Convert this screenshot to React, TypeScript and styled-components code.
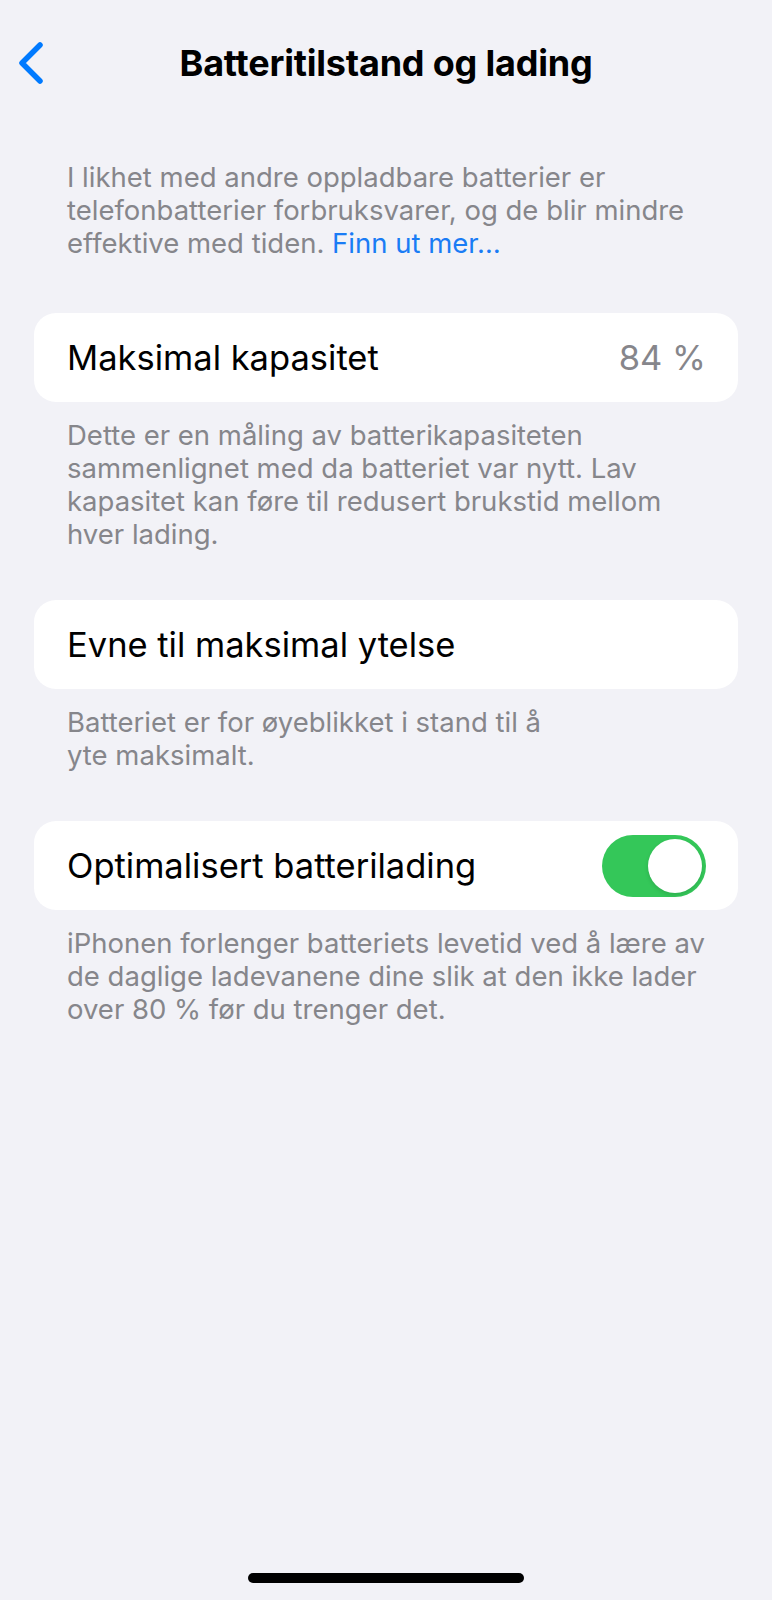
import { FC } from "react";
import styled, { createGlobalStyle } from "styled-components";

const colors = {
  background: "#f2f2f7",
  card: "#ffffff",
  label: "#000000",
  secondary: "#86868b",
  blue: "#1a7cf5",
  green: "#34c759",
};

const GlobalStyle = createGlobalStyle`
  html, body {
    margin: 0;
    padding: 0;
    background: ${colors.background};
  }
  body {
    font-family: Inter, "Noto Sans", "Liberation Sans", sans-serif;
    -webkit-font-smoothing: antialiased;
  }
`;

const Page = styled.div`
  min-height: 1600px;
  display: flex;
  flex-direction: column;
  background: ${colors.background};
  box-sizing: border-box;
  padding-bottom: 17px;
`;

const NavBar = styled.header`
  height: 126px;
  display: grid;
  grid-template-columns: 1fr auto 1fr;
  align-items: center;
  padding: 0 18px;
`;

const BackButton = styled.button`
  width: 30px;
  height: 44px;
  padding: 0;
  border: none;
  background: none;
  display: flex;
  align-items: center;
  justify-content: flex-start;
  cursor: pointer;
`;

const Title = styled.h1`
  margin: 0;
  font-size: 36px;
  font-weight: 700;
  letter-spacing: -0.2px;
  color: ${colors.label};
`;

const Content = styled.main`
  display: flex;
  flex-direction: column;
  gap: 49px;
  padding: 35px 34px 0;

  & > p:first-child {
    margin-bottom: 4px;
  }
`;

const Section = styled.section`
  display: flex;
  flex-direction: column;
  gap: 17px;
`;

const Note = styled.p`
  margin: 0;
  padding: 0 33px;
  font-size: 27.5px;
  line-height: 33px;
  white-space: nowrap;
  color: ${colors.secondary};
`;

const Link = styled.a`
  color: ${colors.blue};
  text-decoration: none;
`;

const Card = styled.div`
  height: 89px;
  background: ${colors.card};
  border-radius: 22px;
  display: flex;
  align-items: center;
  justify-content: space-between;
  padding: 0 32px 0 33px;
`;

const RowLabel = styled.span`
  font-size: 34.5px;
  color: ${colors.label};
`;

const RowValue = styled.span`
  font-size: 34.5px;
  color: ${colors.secondary};
`;

const Toggle = styled.div<{ $on: boolean }>`
  width: 104px;
  height: 62px;
  border-radius: 31px;
  background: ${(p) => (p.$on ? colors.green : "#e9e9eb")};
  display: flex;
  align-items: center;
  justify-content: ${(p) => (p.$on ? "flex-end" : "flex-start")};
  padding: 0 4px;
  box-sizing: border-box;
`;

const Knob = styled.div`
  width: 54px;
  height: 54px;
  border-radius: 50%;
  background: #ffffff;
  box-shadow: 0 2px 4px rgba(0, 0, 0, 0.12);
`;

const HomeIndicator = styled.div`
  margin: auto auto 0;
  width: 276px;
  height: 10px;
  border-radius: 5px;
  background: #000000;
`;

const Chevron: FC = () => (
  <svg width="26" height="42" viewBox="0 0 26 42">
    <polyline
      points="22,3 4,21 22,39"
      fill="none"
      stroke="#007aff"
      strokeWidth="5.5"
      strokeLinecap="round"
      strokeLinejoin="round"
    />
  </svg>
);

const App: FC = () => {
  return (
    <Page>
      <GlobalStyle />
      <NavBar>
        <BackButton aria-label="Tilbake">
          <Chevron />
        </BackButton>
        <Title>Batteritilstand og lading</Title>
        <span />
      </NavBar>
      <Content>
        <Note>
          I likhet med andre oppladbare batterier er
          <br />
          telefonbatterier forbruksvarer, og de blir mindre
          <br />
          effektive med tiden. <Link href="#">Finn ut mer…</Link>
        </Note>
        <Section>
          <Card>
            <RowLabel>Maksimal kapasitet</RowLabel>
            <RowValue>84 %</RowValue>
          </Card>
          <Note>
            Dette er en måling av batterikapasiteten
            <br />
            sammenlignet med da batteriet var nytt. Lav
            <br />
            kapasitet kan føre til redusert brukstid mellom
            <br />
            hver lading.
          </Note>
        </Section>
        <Section>
          <Card>
            <RowLabel>Evne til maksimal ytelse</RowLabel>
          </Card>
          <Note>
            Batteriet er for øyeblikket i stand til å
            <br />
            yte maksimalt.
          </Note>
        </Section>
        <Section>
          <Card>
            <RowLabel>Optimalisert batterilading</RowLabel>
            <Toggle $on>
              <Knob />
            </Toggle>
          </Card>
          <Note>
            iPhonen forlenger batteriets levetid ved å lære av
            <br />
            de daglige ladevanene dine slik at den ikke lader
            <br />
            over 80 % før du trenger det.
          </Note>
        </Section>
      </Content>
      <HomeIndicator />
    </Page>
  );
};

export default App;
